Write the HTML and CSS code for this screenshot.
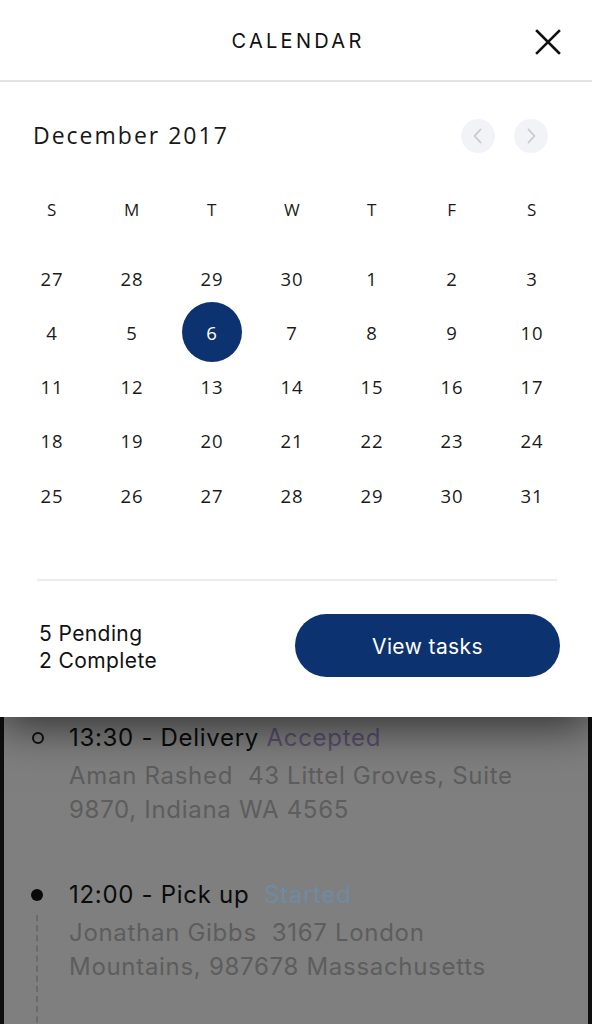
FILE: index.html
```html
<!DOCTYPE html>
<html>
<head>
<meta charset="utf-8">
<link rel="stylesheet" href="styles.css">
</head>
<body>
<div class="page">
  <section class="sheet">
    <header class="sheet-header">
      <h1 class="sheet-title">CALENDAR</h1>
      <button class="close-btn" aria-label="Close">
        <svg width="28" height="28" viewBox="0 0 28 28"><path d="M3 3 L25 25 M25 3 L3 25" stroke="#111" stroke-width="2.6" stroke-linecap="square" fill="none"/></svg>
      </button>
    </header>

    <div class="calendar">
      <div class="month-row">
        <div class="month-name">December 2017</div>
        <div class="month-nav">
          <button class="nav-btn" aria-label="Previous month">
            <svg width="34" height="34" viewBox="0 0 34 34"><path d="M19.5 10.5 L13.5 17 L19.5 23.5" stroke="#c6c8d0" stroke-width="1.8" fill="none" stroke-linecap="round" stroke-linejoin="round"/></svg>
          </button>
          <button class="nav-btn" aria-label="Next month">
            <svg width="34" height="34" viewBox="0 0 34 34"><path d="M14.5 10.5 L20.5 17 L14.5 23.5" stroke="#c6c8d0" stroke-width="1.8" fill="none" stroke-linecap="round" stroke-linejoin="round"/></svg>
          </button>
        </div>
      </div>

      <div class="weekdays">
        <span>S</span><span>M</span><span>T</span><span>W</span><span>T</span><span>F</span><span>S</span>
      </div>

      <div class="days">
        <span class="day">27</span><span class="day">28</span><span class="day">29</span><span class="day">30</span><span class="day">1</span><span class="day">2</span><span class="day">3</span>
        <span class="day">4</span><span class="day">5</span><span class="day"><b class="selected">6</b></span><span class="day">7</span><span class="day">8</span><span class="day">9</span><span class="day">10</span>
        <span class="day">11</span><span class="day">12</span><span class="day">13</span><span class="day">14</span><span class="day">15</span><span class="day">16</span><span class="day">17</span>
        <span class="day">18</span><span class="day">19</span><span class="day">20</span><span class="day">21</span><span class="day">22</span><span class="day">23</span><span class="day">24</span>
        <span class="day">25</span><span class="day">26</span><span class="day">27</span><span class="day">28</span><span class="day">29</span><span class="day">30</span><span class="day">31</span>
      </div>
    </div>

    <div class="divider"></div>

    <div class="summary">
      <div class="counts">
        <div>5 Pending</div>
        <div>2 Complete</div>
      </div>
      <button class="view-btn">View tasks</button>
    </div>
  </section>

  <section class="tasks">
    <div class="task">
      <div class="bullet"><span class="dot open"></span></div>
      <div class="task-body">
        <div class="task-title">13:30 - Delivery <span class="status accepted">Accepted</span></div>
        <div class="task-addr">Aman Rashed&nbsp; 43 Littel Groves, Suite 9870, Indiana WA 4565</div>
      </div>
    </div>
    <div class="task">
      <div class="bullet"><span class="dot filled"></span><span class="dash"></span></div>
      <div class="task-body">
        <div class="task-title">12:00 - Pick up&nbsp; <span class="status started">Started</span></div>
        <div class="task-addr">Jonathan Gibbs&nbsp; 3167 London Mountains, 987678 Massachusetts</div>
      </div>
    </div>
  </section>
</div>
</body>
</html>
```

FILE: styles.css
```css
* { box-sizing: border-box; }
html, body { margin: 0; padding: 0; }
body {
  width: 592px;
  height: 1024px;
  overflow: hidden;
  background: #0e0e0e;
  font-family: Inter, "Liberation Sans", sans-serif;
}
.page {
  display: flex;
  flex-direction: column;
  height: 1024px;
}
.sheet {
  position: relative;
  z-index: 2;
  background: #fff;
  height: 717px;
  flex: none;
  box-shadow: 0 8px 44px rgba(0, 0, 0, 0.65);
}
.sheet-header {
  height: 82px;
  border-bottom: 2px solid #e3e3e3;
  display: flex;
  align-items: center;
  justify-content: center;
  position: relative;
}
.sheet-title {
  margin: 0;
  font-family: Inter, "Liberation Sans", sans-serif;
  font-weight: 400;
  font-size: 20px;
  letter-spacing: 3.3px;
  color: #111;
  padding-left: 4px;
  margin-top: 2px;
}
.close-btn {
  position: absolute;
  right: 30px;
  top: 28px;
  width: 28px;
  height: 28px;
  padding: 0;
  border: 0;
  background: none;
  display: flex;
}
.calendar {
  padding-top: 36px;
  font-family: "Open Sans", sans-serif;
  color: #1b1b1b;
}
.month-row {
  height: 36px;
  display: flex;
  align-items: center;
  justify-content: space-between;
  padding: 0 44px 0 33px;
}
.month-name {
  font-size: 23px;
  letter-spacing: 2px;
  color: #181818;
  margin-top: -3px;
}
.month-nav {
  display: flex;
  gap: 19px;
}
.nav-btn {
  width: 34px;
  height: 34px;
  border-radius: 50%;
  border: 0;
  padding: 0;
  background: #f2f3f7;
  display: flex;
}
.weekdays, .days {
  display: grid;
  grid-template-columns: repeat(7, 80px);
  padding-left: 12px;
}
.weekdays {
  margin-top: 40px;
  height: 30px;
  align-items: center;
  font-size: 17px;
  letter-spacing: 0.5px;
}
.weekdays span, .day {
  text-align: center;
}
.days {
  margin-top: 27px;
  grid-auto-rows: 54.25px;
  font-size: 18.5px;
}
.day {
  display: flex;
  align-items: center;
  justify-content: center;
  letter-spacing: 0.8px;
}
.selected {
  font-weight: 400;
  width: 60px;
  height: 60px;
  margin: -3px 0;
  border-radius: 50%;
  background: #0d3270;
  color: #fff;
  display: flex;
  align-items: center;
  justify-content: center;
}
.divider {
  margin: 57px 35px 0 37px;
  height: 2px;
  background: #ececec;
}
.summary {
  display: flex;
  align-items: center;
  justify-content: space-between;
  padding: 33px 32px 0 39px;
}
.counts {
  font-size: 21px;
  line-height: 27px;
  letter-spacing: 0.4px;
  color: #111;
  margin-top: 2px;
}
.view-btn {
  width: 265px;
  height: 63px;
  border: 0;
  border-radius: 32px;
  background: #0d3270;
  color: #fff;
  font-family: Inter, "Liberation Sans", sans-serif;
  font-size: 21px;
  letter-spacing: 0.4px;
  padding-top: 2px;
}
.tasks {
  flex: 1;
  margin: 0 4px;
  background: #7f7f7f;
  padding-top: 4px;
  overflow: hidden;
}
.task {
  display: grid;
  grid-template-columns: 65px 1fr;
  margin-bottom: 51px;
}
.bullet {
  position: relative;
}
.dot {
  position: absolute;
  left: 28px;
  top: 11px;
  width: 12px;
  height: 12px;
  border-radius: 50%;
}
.dot.open {
  border: 2px solid #111;
}
.dot.filled {
  left: 27px;
  background: #0a0a0a;
}
.dash {
  position: absolute;
  left: 32px;
  top: 37px;
  height: 300px;
  border-left: 2px dashed #6a6a6a;
}
.task-body {
  padding-right: 58px;
}
.task-title {
  font-size: 24px;
  line-height: 34px;
  letter-spacing: 0.7px;
  color: #0b0b0b;
}
.status.accepted { color: #5b4e6e; }
.status.started { color: #6d8ba3; }
.task-addr {
  margin-top: 4px;
  font-size: 24px;
  line-height: 34px;
  letter-spacing: 0.7px;
  color: #5d5d5d;
}
```
